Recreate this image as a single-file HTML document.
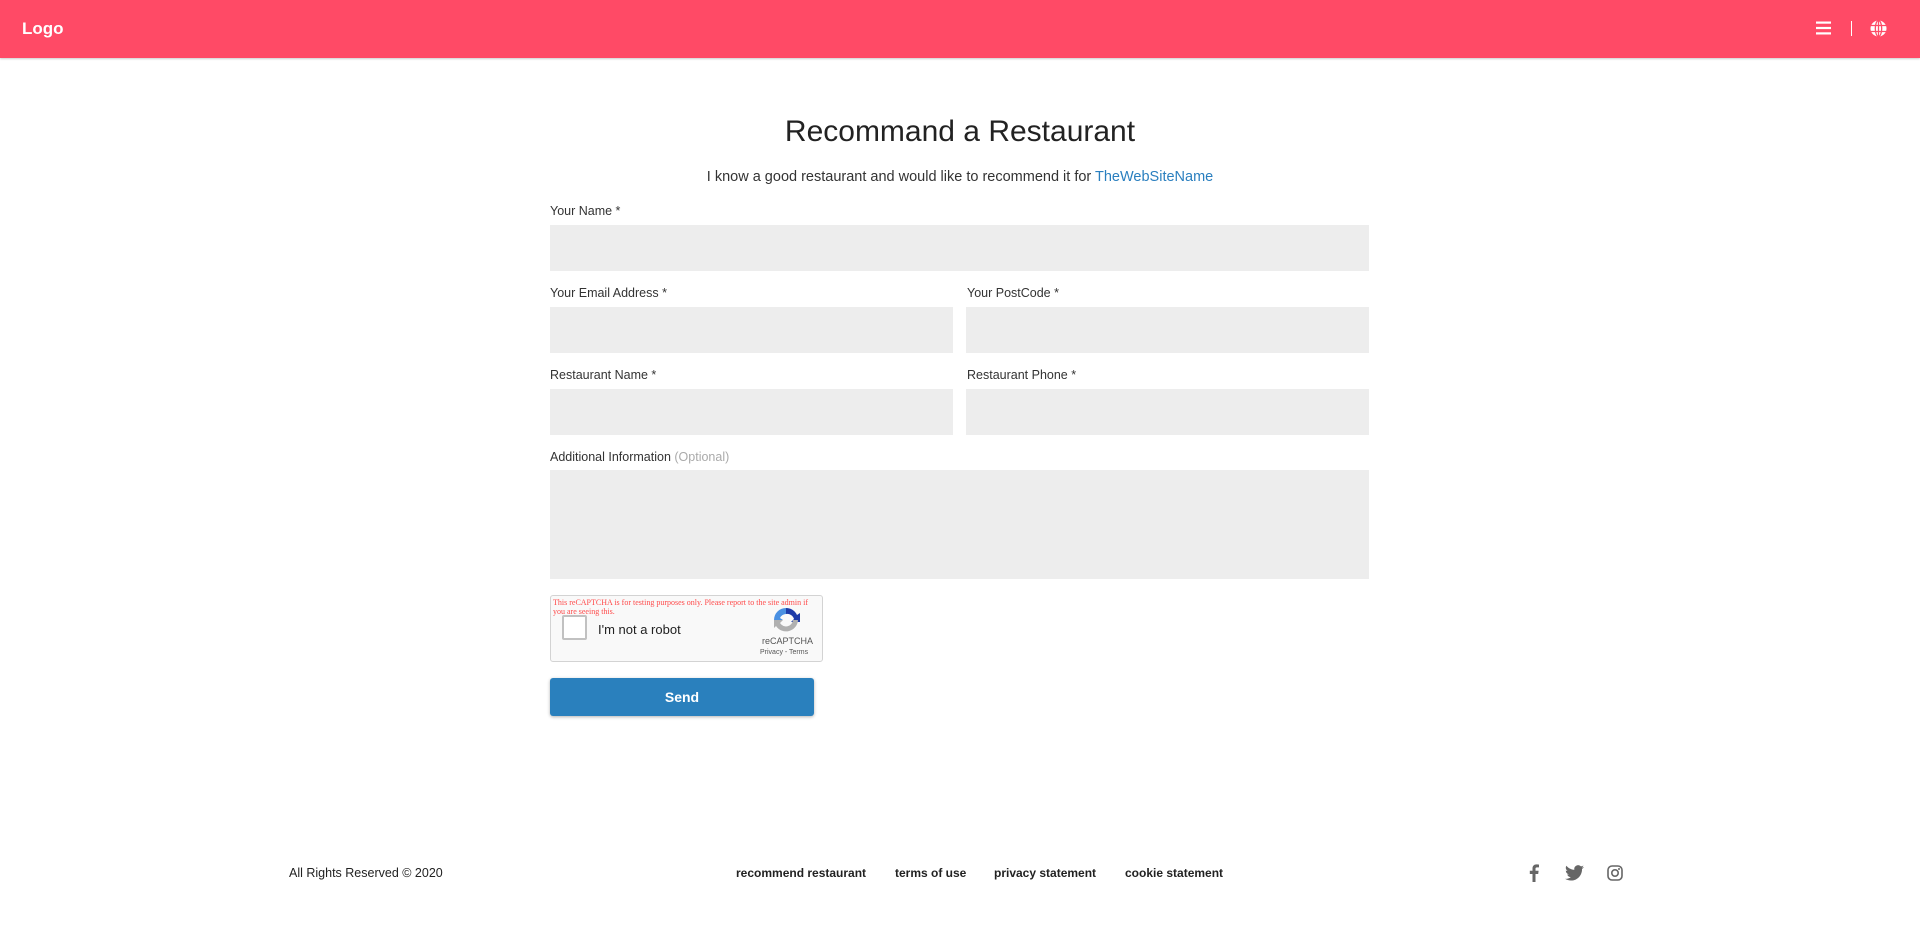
<!DOCTYPE html>
<html><head><meta charset="utf-8"><style>
*{box-sizing:border-box;margin:0;padding:0}
body{width:1920px;height:928px;background:#fff;font-family:"Liberation Sans",sans-serif;color:#222;position:relative;overflow:hidden}
.hdr{position:absolute;left:0;top:0;width:1920px;height:58px;background:#ff4a66;box-shadow:0 1px 2px rgba(0,0,0,.2)}
.logo{position:absolute;left:22px;top:19px;color:#fff;font-weight:bold;font-size:17px}
.abs{position:absolute}
h1{position:absolute;left:0;width:1920px;text-align:center;top:115px;font-weight:normal;font-size:30px;color:#222}
.sub{position:absolute;left:0;width:1920px;text-align:center;top:169px;font-size:14.5px;color:#333}
.sub a{color:#2a7fbf;text-decoration:none}
.lbl{position:absolute;font-size:12.5px;color:#333}
.in{position:absolute;background:#ededed}
.ft{position:absolute;top:866px;font-size:12.5px;color:#222}
.fl{font-weight:bold;color:#222;font-size:12px}
</style></head><body>
<div class="hdr"><div class="logo">Logo</div>
<svg class="abs" style="left:1816px;top:21px" width="15" height="14"><rect y="0.5" width="15" height="2.2" fill="#fff"/><rect y="5.9" width="15" height="2.2" fill="#fff"/><rect y="11.3" width="15" height="2.2" fill="#fff"/></svg>
<div class="abs" style="left:1851px;top:21px;width:1px;height:15px;background:#fff"></div>
<svg class="abs" style="left:1870px;top:20px" width="17" height="17" viewBox="0 0 17 17"><circle cx="8.5" cy="8.5" r="8" fill="#fff"/><g stroke="#ff4a66" stroke-width="1.3" fill="none"><ellipse cx="8.5" cy="8.5" rx="3.2" ry="8"/><line x1="8.5" y1="0" x2="8.5" y2="17"/><line x1="0" y1="5.5" x2="17" y2="5.5"/><line x1="0" y1="11.5" x2="17" y2="11.5"/></g></svg>
</div>
<h1>Recommand a Restaurant</h1>
<div class="sub">I know a good restaurant and would like to recommend it for <a>TheWebSiteName</a></div>
<div class="lbl" style="left:550px;top:204px">Your Name *</div>
<div class="in" style="left:550px;top:225px;width:819px;height:46px"></div>
<div class="lbl" style="left:550px;top:286px">Your Email Address *</div>
<div class="lbl" style="left:967px;top:286px">Your PostCode *</div>
<div class="in" style="left:550px;top:307px;width:403px;height:46px"></div>
<div class="in" style="left:966px;top:307px;width:403px;height:46px"></div>
<div class="lbl" style="left:550px;top:368px">Restaurant Name *</div>
<div class="lbl" style="left:967px;top:368px">Restaurant Phone *</div>
<div class="in" style="left:550px;top:389px;width:403px;height:46px"></div>
<div class="in" style="left:966px;top:389px;width:403px;height:46px"></div>
<div class="lbl" style="left:550px;top:450px">Additional Information <span style="color:#aaa">(Optional)</span></div>
<div class="in" style="left:550px;top:470px;width:819px;height:109px"></div>
<div class="abs" style="left:550px;top:595px;width:273px;height:67px;background:#f9f9f9;border:1px solid #d3d3d3;border-radius:3px">
<div style="position:absolute;left:2px;top:2px;font-family:'Liberation Serif',serif;font-size:8px;color:#ff4a4a;line-height:9px;width:265px">This reCAPTCHA is for testing purposes only. Please report to the site admin if you are seeing this.</div>
<div style="position:absolute;left:11px;top:19px;width:25px;height:25px;background:#fff;border:2px solid #c1c1c1;border-radius:2px"></div>
<div style="position:absolute;left:47px;top:26px;font-size:13px;color:#222">I'm not a robot</div>
<svg style="position:absolute;left:220px;top:9px" width="30" height="30" viewBox="0 0 30 30"><path d="M15 3a12 12 0 0 1 11 7l3-2v9h-9l3-3a7 7 0 0 0-8-5z" fill="#1c3aa9"/><path d="M3 15A12 12 0 0 1 15 3v6a7 7 0 0 0-6 4l3 2H3z" fill="#4a90e2"/><path d="M27 15a12 12 0 0 1-22 6l-2 2v-8h9l-3 3a7 7 0 0 0 13-3z" fill="#b0b0b0"/></svg>
<div style="position:absolute;left:211px;top:40px;font-size:9px;color:#555">reCAPTCHA</div>
<div style="position:absolute;left:209px;top:53px;font-size:7px;color:#555">Privacy - Terms</div>
</div>
<div class="abs" style="left:550px;top:678px;width:264px;height:38px;background:#2a80bd;border-radius:3px;box-shadow:0 1px 3px rgba(0,0,0,.3);color:#fff;font-weight:bold;font-size:14px;text-align:center;line-height:38px">Send</div>
<div class="ft" style="left:289px">All Rights Reserved © 2020</div>
<div class="ft fl" style="left:736px">recommend restaurant</div>
<div class="ft fl" style="left:895px">terms of use</div>
<div class="ft fl" style="left:994px">privacy statement</div>
<div class="ft fl" style="left:1125px">cookie statement</div>
<svg class="abs" style="left:1529px;top:864px" width="10" height="18" viewBox="0 0 10 18"><path d="M6.5 18V10h2.7l.4-3.2H6.5V4.9c0-.9.3-1.5 1.6-1.5H10V.6C9.6.5 8.6.4 7.5.4 5.1.4 3.5 1.9 3.5 4.5v2.3H.8V10h2.7v8z" fill="#666"/></svg>
<svg class="abs" style="left:1565px;top:865px" width="19" height="16" viewBox="0 0 24 20"><path d="M24 2.4a10 10 0 0 1-2.8.8A5 5 0 0 0 23.3.5a10 10 0 0 1-3.1 1.2A4.9 4.9 0 0 0 11.8 6 14 14 0 0 1 1.7.9a4.9 4.9 0 0 0 1.5 6.6A4.9 4.9 0 0 1 1 6.9a4.9 4.9 0 0 0 3.9 4.8 4.9 4.9 0 0 1-2.2.1 4.9 4.9 0 0 0 4.6 3.4A9.9 9.9 0 0 1 0 17.300 14 14 0 0 0 7.5 19.5c9 0 14-7.5 14-14v-.6A10 10 0 0 0 24 2.4z" fill="#666"/></svg>
<svg class="abs" style="left:1607px;top:865px" width="16" height="16" viewBox="0 0 16 16"><rect x="1" y="1" width="14" height="14" rx="4" fill="none" stroke="#666" stroke-width="1.6"/><circle cx="8" cy="8" r="3.2" fill="none" stroke="#666" stroke-width="1.6"/><circle cx="12" cy="4" r="1" fill="#666"/></svg>
</body></html>
